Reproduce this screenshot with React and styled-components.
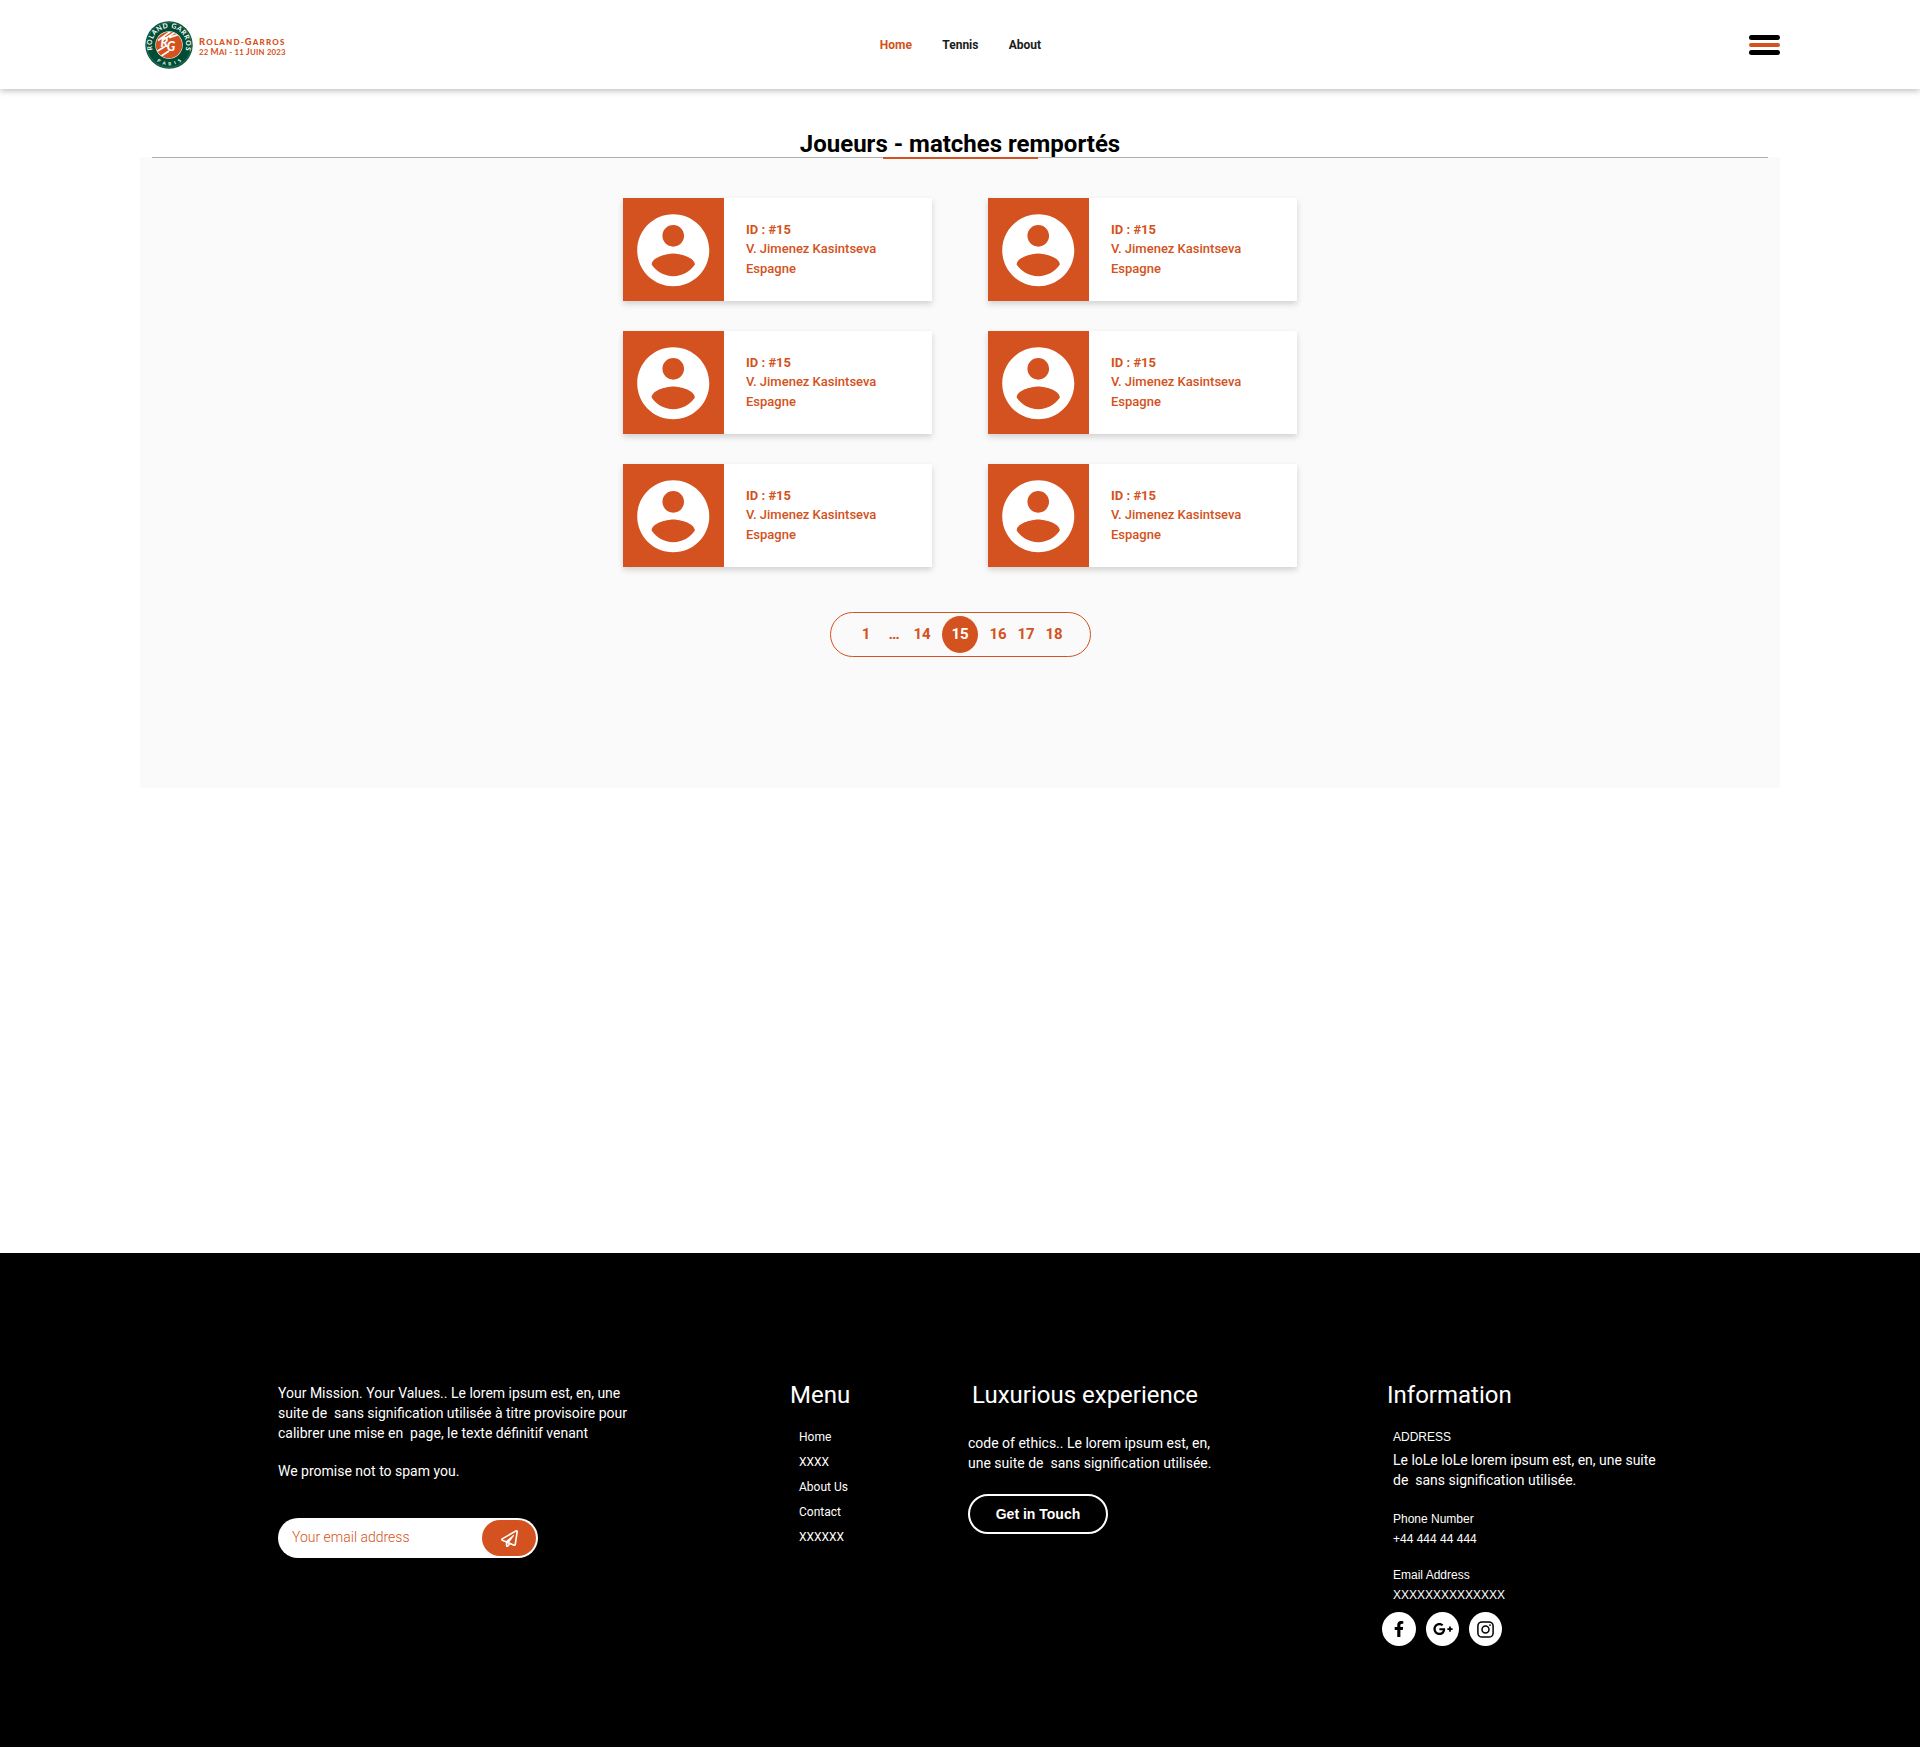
import React from "react";
import styled, { createGlobalStyle } from "styled-components";
import { FaFacebookF, FaGooglePlusG, FaRegPaperPlane } from "react-icons/fa";

const ORANGE = "#d35220";
const ROBOTO = 'Roboto, "Liberation Sans", sans-serif';
const ARIAL = '"Liberation Sans", Arial, sans-serif';

const GlobalStyle = createGlobalStyle`
  *, *::before, *::after { box-sizing: border-box; }
  body { margin: 0; background: #fff; font-family: ${ROBOTO}; }
  h1, h2, p, ul { margin: 0; padding: 0; font-weight: 400; }
  ul { list-style: none; }
  a { color: inherit; text-decoration: none; }
  button, input { font-family: inherit; padding: 0; border: 0; }
`;

const Page = styled.div`
  width: 1920px;
  height: 1748px;
  display: flex;
  flex-direction: column;
  overflow: hidden;
`;

const Header = styled.header`
  flex: none;
  height: 89px;
  padding: 0 140px 0 145px;
  display: grid;
  grid-template-columns: 1fr auto 1fr;
  align-items: center;
  background: #fff;
  box-shadow: 0 2px 6px rgba(0, 0, 0, 0.25);
`;

const Brand = styled.a`
  display: flex;
  align-items: center;
  gap: 6px;
`;

const BrandText = styled.span`
  display: flex;
  flex-direction: column;
  padding-top: 7px;
  color: ${ORANGE};
  font-family: Lato, sans-serif;
  white-space: nowrap;
`;

const BrandName = styled.span`
  font-size: 8px;
  line-height: 10px;
  font-weight: 900;
  letter-spacing: 1.18px;
`;

const BrandDates = styled.span`
  font-size: 7.8px;
  line-height: 11.5px;
  font-weight: 700;
  letter-spacing: 0.22px;
`;

const Cap = styled.span`
  font-size: 9.3px;
`;

const DateCap = styled.span`
  font-size: 8.6px;
`;

const Nav = styled.nav`
  display: flex;
  gap: 30.3px;
  margin-left: -4px;
`;

const NavLink = styled.a`
  font-size: 12px;
  line-height: 20px;
  font-weight: 700;
  color: ${(p) => (p.$active ? ORANGE : "#1a1a1a")};
`;

const Burger = styled.button`
  justify-self: end;
  width: 31px;
  background: none;
  display: flex;
  flex-direction: column;
  gap: 3px;
`;

const BurgerBar = styled.span`
  height: ${(p) => (p.$accent ? 4 : 5)}px;
  border-radius: 3px;
  background: ${(p) => (p.$accent ? ORANGE : "#000")};
`;

const Main = styled.main`
  flex: none;
  height: 1164px;
  padding: 41px 140px 0;
`;

const Title = styled.h1`
  height: 27px;
  line-height: 28px;
  font-size: 24px;
  font-weight: 700;
  text-align: center;
  color: #000;
`;

const Panel = styled.section`
  height: 631px;
  background: #fafafa;
  display: flex;
  flex-direction: column;
  align-items: center;
`;

const Rule = styled.div`
  width: 1616px;
  height: 1px;
  background: #b0b0b0;
  display: flex;
  justify-content: center;
  align-items: center;
`;

const RuleAccent = styled.span`
  flex: none;
  width: 155px;
  height: 2px;
  background: ${ORANGE};
`;

const Cards = styled.div`
  margin-top: 40px;
  display: grid;
  grid-template-columns: 309px 309px;
  column-gap: 56px;
  row-gap: 30px;
`;

const Card = styled.article`
  height: 103px;
  display: flex;
  background: #fff;
  box-shadow: 0 3px 6px rgba(0, 0, 0, 0.16);
`;

const Avatar = styled.div`
  flex: none;
  width: 100.5px;
  padding-top: 1px;
  display: flex;
  align-items: center;
  justify-content: center;
  background: ${ORANGE};
`;

const CardText = styled.div`
  padding: 21.5px 0 0 22.5px;
  display: flex;
  flex-direction: column;
  font-size: 13px;
  line-height: 19.5px;
  font-weight: 500;
  color: ${ORANGE};
  white-space: nowrap;
`;

const CardId = styled.span`
  font-weight: 700;
`;

const Pagination = styled.nav`
  margin-top: 45px;
  width: 261px;
  height: 45px;
  border: 1px solid ${ORANGE};
  border-radius: 23px;
  display: flex;
  align-items: center;
  justify-content: center;
  font-size: 15px;
  line-height: 37px;
  font-weight: 700;
  color: ${ORANGE};
`;

const PageLink = styled.a`
  flex: none;
  width: 28px;
  height: 37px;
  text-align: center;
  ${(p) =>
    p.$active &&
    `width: 36px; margin: 0 6px; border-radius: 50%; background: ${ORANGE}; color: #fff;`}
`;

const Footer = styled.footer`
  flex: none;
  height: 494px;
  padding: 128px 0 0 278px;
  background: #000;
  color: #fff;
  display: grid;
  grid-template-columns: 512px 178px 419px 1fr;
  align-items: start;
`;

const Column = styled.section`
  display: flex;
  flex-direction: column;
  align-items: flex-start;
`;

const FooterTitle = styled.h2`
  padding-left: ${(p) => p.$indent || 0}px;
  font-size: 24px;
  line-height: 28px;
  white-space: nowrap;
`;

const Copy = styled.p`
  margin-top: ${(p) => p.$top}px;
  padding-left: ${(p) => p.$indent || 0}px;
  font-size: 14px;
  line-height: 20px;
  white-space: pre;
`;

const Small = styled.p`
  margin-top: ${(p) => p.$top}px;
  padding-left: 6px;
  font-family: ${ARIAL};
  font-size: 12px;
  line-height: 20px;
  white-space: pre;
`;

const MenuList = styled.ul`
  margin-top: 16px;
  padding-left: 9px;
  font-size: 12px;
  line-height: 25px;
`;

const Subscribe = styled.form`
  margin-top: 37px;
  width: 260px;
  height: 40px;
  padding: 2px 2px 2px 14px;
  display: flex;
  border-radius: 20px;
  background: #fff;
`;

const EmailInput = styled.input`
  flex: 1;
  min-width: 0;
  height: 34px;
  background: none;
  outline: none;
  font-size: 14px;
  font-weight: 300;
  color: ${ORANGE};
  &::placeholder { color: ${ORANGE}; opacity: 1; }
`;

const SendButton = styled.button`
  width: 54px;
  height: 36px;
  display: flex;
  align-items: center;
  justify-content: center;
  border-radius: 18px;
  background: ${ORANGE};
  color: #fff;
`;

const TouchButton = styled.button`
  margin-top: 21px;
  width: 140px;
  height: 40px;
  border: 2px solid #fff;
  border-radius: 20px;
  background: none;
  color: #fff;
  font-family: ${ARIAL};
  font-size: 14px;
  font-weight: 700;
`;

const Socials = styled.div`
  margin: 7px 0 0 -5px;
  display: flex;
  gap: 10px;
`;

const Social = styled.a`
  width: ${(p) => p.$w}px;
  height: 34px;
  display: flex;
  align-items: center;
  justify-content: center;
  border-radius: 50%;
  background: #fff;
  color: #000;
`;

const Emblem = () => (
  <svg width="48" height="48" viewBox="0 0.4 48 48">
    <defs>
      <path id="arcTop" d="M9.3 33.2 A17.1 17.1 0 1 1 38.7 33.2" />
      <path id="arcBottom" d="M3.6 24.4 A20.4 20.4 0 0 0 44.4 24.4" />
      <clipPath id="clay"><circle cx="24" cy="24.4" r="13.2" /></clipPath>
    </defs>
    <circle cx="24" cy="24.4" r="23.7" fill="#004d36" />
    <circle cx="24" cy="24.4" r="22.4" fill="none" stroke="#7fa595" strokeWidth="0.4" />
    <circle cx="24" cy="24.4" r="13.7" fill="#fff" />
    <circle cx="24" cy="24.4" r="13.2" fill={ORANGE} />
    <g clipPath="url(#clay)" stroke="#fff" fill="none">
      <path d="M13 20 L28 9 M17 20 L32 10.5 M24 17 L33 14 M10 32 L20 26 M14 37 L24 30.5" strokeWidth="1.8" />
    </g>
    <text x="15.6" y="26.6" fontFamily="Lato, sans-serif" fontSize="12.5" fontWeight="900" fontStyle="italic" fill="#fff">
      R<tspan dx="-1.2" dy="4.2">G</tspan>
    </text>
    <g fontFamily="Lato, sans-serif" fontWeight="700" fill="#fff" textAnchor="middle">
      <text fontSize="6.8" letterSpacing="0.5"><textPath href="#arcTop" startOffset="50.5%">ROLAND GARROS</textPath></text>
      <text fontSize="4.7" letterSpacing="3.4"><textPath href="#arcBottom" startOffset="53%">PARIS</textPath></text>
    </g>
  </svg>
);

const AccountIcon = () => (
  <svg width="86.5" height="86.5" viewBox="0 0 24 24">
    <path
      fill="#fff"
      d="M12 2C6.48 2 2 6.48 2 12s4.48 10 10 10 10-4.48 10-10S17.52 2 12 2zm0 3c1.66 0 3 1.34 3 3s-1.34 3-3 3-3-1.34-3-3 1.34-3 3-3zm0 14.2c-2.5 0-4.71-1.28-6-3.22.03-1.99 4-3.08 6-3.08 1.99 0 5.97 1.09 6 3.08-1.29 1.94-3.5 3.22-6 3.22z"
    />
  </svg>
);

const InstagramIcon = () => (
  <svg width="17" height="17" viewBox="0 0 17 17" fill="none" stroke="#000" strokeWidth="1.5">
    <rect x="0.9" y="0.9" width="15.2" height="15.2" rx="4.2" />
    <circle cx="8.5" cy="8.5" r="3.5" />
    <circle cx="13" cy="4.1" r="0.9" fill="#000" stroke="none" />
  </svg>
);

const players = Array.from({ length: 6 }, () => ({
  id: "#15",
  name: "V. Jimenez Kasintseva",
  country: "Espagne",
}));

const pages = ["1", "…", "14", "15", "16", "17", "18"];
const currentPage = "15";

export default function App() {
  return (
    <Page>
      <GlobalStyle />
      <Header>
        <Brand href="#">
          <Emblem />
          <BrandText>
            <BrandName><Cap>R</Cap>OLAND-<Cap>G</Cap>ARROS</BrandName>
            <BrandDates>22 <DateCap>M</DateCap>AI - 11 <DateCap>J</DateCap>UIN 2023</BrandDates>
          </BrandText>
        </Brand>
        <Nav>
          <NavLink href="#" $active>Home</NavLink>
          <NavLink href="#">Tennis</NavLink>
          <NavLink href="#">About</NavLink>
        </Nav>
        <Burger aria-label="Menu">
          <BurgerBar />
          <BurgerBar $accent />
          <BurgerBar />
        </Burger>
      </Header>

      <Main>
        <Title>Joueurs - matches remportés</Title>
        <Panel>
          <Rule><RuleAccent /></Rule>
          <Cards>
            {players.map((p, i) => (
              <Card key={i}>
                <Avatar><AccountIcon /></Avatar>
                <CardText>
                  <CardId>{`ID : ${p.id}`}</CardId>
                  <span>{p.name}</span>
                  <span>{p.country}</span>
                </CardText>
              </Card>
            ))}
          </Cards>
          <Pagination>
            {pages.map((label) => (
              <PageLink key={label} href="#" $active={label === currentPage}>{label}</PageLink>
            ))}
          </Pagination>
        </Panel>
      </Main>

      <Footer>
        <Column>
          <Copy $top={2}>{"Your Mission. Your Values.. Le lorem ipsum est, en, une\nsuite de  sans signification utilisée à titre provisoire pour\ncalibrer une mise en  page, le texte définitif venant"}</Copy>
          <Copy $top={18}>We promise not to spam you.</Copy>
          <Subscribe>
            <EmailInput placeholder="Your email address" />
            <SendButton type="button" aria-label="Send"><FaRegPaperPlane size={17} /></SendButton>
          </Subscribe>
        </Column>
        <Column>
          <FooterTitle>Menu</FooterTitle>
          <MenuList>
            <li>Home</li>
            <li>XXXX</li>
            <li>About Us</li>
            <li>Contact</li>
            <li>XXXXXX</li>
          </MenuList>
        </Column>
        <Column>
          <FooterTitle $indent={4}>Luxurious experience</FooterTitle>
          <Copy $top={24}>{"code of ethics.. Le lorem ipsum est, en,\nune suite de  sans signification utilisée."}</Copy>
          <TouchButton>Get in Touch</TouchButton>
        </Column>
        <Column>
          <FooterTitle>Information</FooterTitle>
          <Small $top={18}>ADDRESS</Small>
          <Copy $top={3} $indent={6}>{"Le loLe loLe lorem ipsum est, en, une suite\nde  sans signification utilisée."}</Copy>
          <Small $top={19}>{"Phone Number\n+44 444 44 444"}</Small>
          <Small $top={16}>{"Email Address\nXXXXXXXXXXXXXX"}</Small>
          <Socials>
            <Social href="#" $w={34}><FaFacebookF size={16} /></Social>
            <Social href="#" $w={33}><FaGooglePlusG size={20} /></Social>
            <Social href="#" $w={33}><InstagramIcon /></Social>
          </Socials>
        </Column>
      </Footer>
    </Page>
  );
}
